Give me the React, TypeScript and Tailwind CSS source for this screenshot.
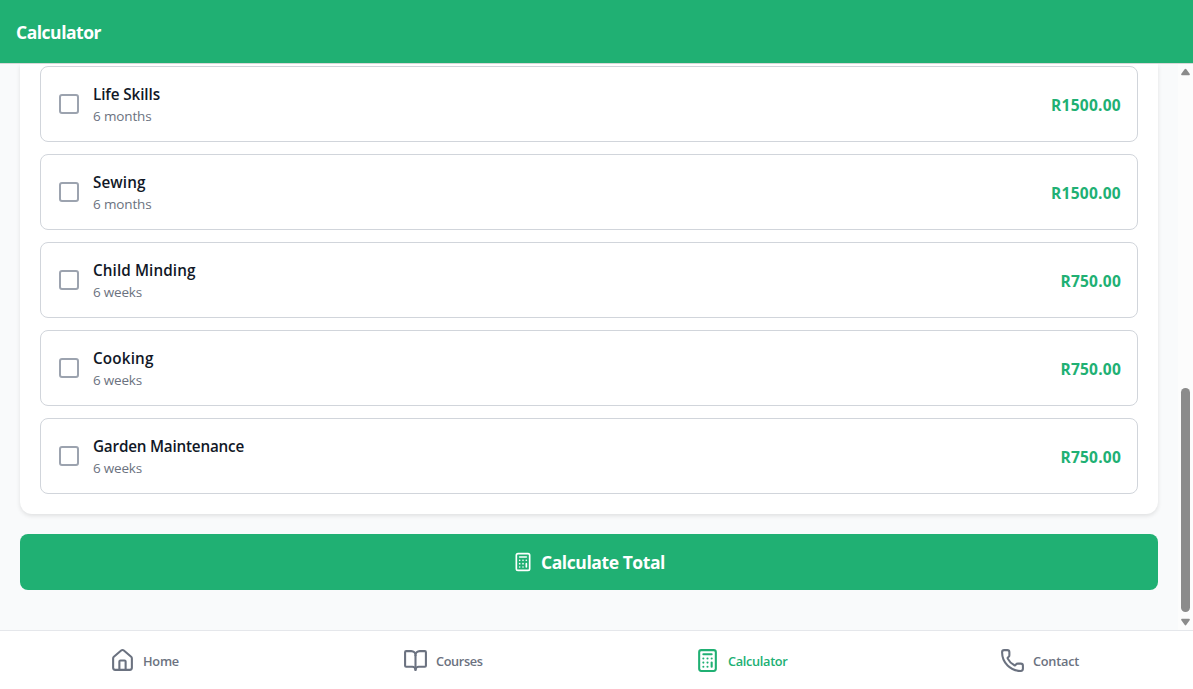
import React from "react";
import { BookOpen, Calculator, House, Phone } from "lucide-react";

const courses = [
  { name: "Life Skills", duration: "6 months", price: "R1500.00", width: 67, sub: 58.5 },
  { name: "Sewing", duration: "6 months", price: "R1500.00", width: 52.5, sub: 58.5 },
  { name: "Child Minding", duration: "6 weeks", price: "R750.00", width: 102.5, sub: 49 },
  { name: "Cooking", duration: "6 weeks", price: "R750.00", width: 60.5, sub: 49 },
  { name: "Garden Maintenance", duration: "6 weeks", price: "R750.00", width: 151, sub: 49 },
];

function FitText({ text, width, className }: { text: string; width: number; className: string }) {
  const ref = React.useRef<HTMLSpanElement>(null);
  const [spacing, setSpacing] = React.useState(0);
  React.useLayoutEffect(() => {
    if (ref.current) {
      setSpacing((width - ref.current.getBoundingClientRect().width) / text.length);
    }
  }, [text, width]);
  return (
    <span ref={ref} className={`block w-max whitespace-nowrap ${className}`} style={{ letterSpacing: spacing }}>
      {text}
    </span>
  );
}

const tabs = [
  { label: "Home", width: 36, Icon: House, color: "text-[#6b7280]", pad: "pl-[110px]" },
  { label: "Courses", width: 46.5, Icon: BookOpen, color: "text-[#6b7280]", pad: "pl-[104.75px]" },
  { label: "Calculator", width: 59.5, Icon: Calculator, color: "text-[#20b073]", pad: "pl-[98.5px]" },
  { label: "Contact", width: 46, Icon: Phone, color: "text-[#6b7280]", pad: "pl-[105.25px]" },
];

function ScrollArrow({ down = false }: { down?: boolean }) {
  return (
    <svg viewBox="0 0 10 8" className={`h-2 w-[9px] shrink-0 fill-[#8b8b8b] ${down ? "rotate-180" : ""}`}>
      <path d="M4 1Q5-.5 6 1l3.600 5Q10.300 7.500 9 7.500H1Q-.3 7.500.4 6Z" />
    </svg>
  );
}

export default function App() {
  return (
    <div className="flex h-[689px] w-[1193px] flex-col overflow-hidden bg-[#f9fafb] font-['Open_Sans','Noto_Sans',sans-serif]">
      <header className="flex h-16 shrink-0 items-center border-b border-[#d8d8d8] bg-[#20b073] px-4 text-white">
        <FitText text="Calculator" width={85} className="text-[17.5px] leading-6 font-bold" />
      </header>
      <div className="flex min-h-0 flex-1">
        <main className="flex min-w-0 flex-1 flex-col overflow-hidden px-5">
          <section className="flex flex-col gap-3 rounded-b-xl bg-white px-5 pt-0.5 pb-5 shadow-[0_2px_4px_rgba(0,0,0,0.1)]">
            {courses.map((c) => (
              <div key={c.name} className="flex h-[76px] shrink-0 items-center rounded-lg border border-[#d1d5db] pr-4 pl-[18px]">
                <span className="size-5 shrink-0 rounded-[3px] border-2 border-[#9ca3af]" />
                <div className="ml-3.5 flex flex-1 flex-col pt-0.5">
                  <FitText text={c.name} width={c.width} className="text-[15.25px] leading-[22px] font-semibold text-[#111827]" />
                  <FitText text={c.duration} width={c.sub} className="text-[13.5px] leading-[22px] text-[#6b7280]" />
                </div>
                <FitText text={c.price} width={c.price.length === 8 ? 70 : 60.5} className="pt-0.5 text-[15.5px] leading-6 font-bold text-[#20b073]" />
              </div>
            ))}
          </section>
          <button className="mt-5 flex h-14 shrink-0 items-center justify-center gap-2 rounded-lg bg-[#20b073] text-white">
            <Calculator size={20} strokeWidth={2} />
            <FitText text="Calculate Total" width={124} className="text-[17.5px] leading-6 font-bold" />
          </button>
        </main>
        <aside className="flex w-[15px] shrink-0 flex-col items-center bg-[#fcfcfc] pt-1 pb-1">
          <ScrollArrow />
          <div className="mt-[312px] h-56 w-[9px] shrink-0 rounded-full bg-[#8b8b8b]" />
          <div className="flex-1" />
          <ScrollArrow down />
        </aside>
      </div>
      <nav className="grid h-[59px] shrink-0 grid-cols-4 border-t border-[#e5e7eb] bg-white pt-px">
        {tabs.map(({ label, width, Icon, color, pad }) => (
          <a key={label} className={`flex items-center gap-2 ${pad} ${color}`}>
            <Icon size={25} strokeWidth={2} className="shrink-0" />
            <FitText text={label} width={width} className="pt-px text-[12.75px] leading-5 font-semibold" />
          </a>
        ))}
      </nav>
    </div>
  );
}
